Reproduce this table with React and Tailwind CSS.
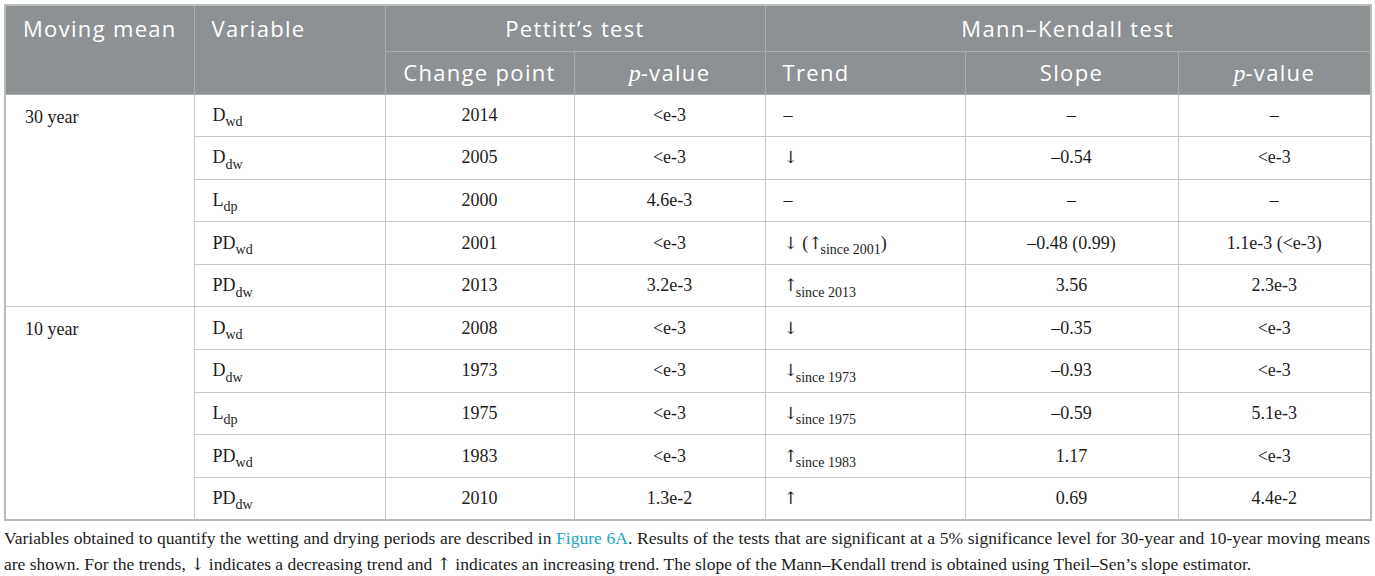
import React from "react";

const serif = { fontFamily: '"Liberation Serif", "Times New Roman", serif' };
const arrowFont = { fontFamily: '"DejaVu Serif", serif' };

function V({ base, sub }) {
    return (
        <span>
            {base}
            <sub className="text-[14px] align-[-2px] leading-none">{sub}</sub>
        </span>
    );
}

function A({ c }) {
    return (
        <span className="text-[17px] font-light" style={arrowFont}>
            {c}
        </span>
    );
}

function Since({ arrow, year }) {
    return (
        <span>
            <A c={arrow} />
            <sub className="text-[14px] align-[-2px] leading-none ml-[-2px]">since {year}</sub>
        </span>
    );
}

const groups = [
    {
        label: "30 year",
        rows: [
            [<V base="D" sub="wd" />, "2014", "<e-3", "–", "–", "–"],
            [<V base="D" sub="dw" />, "2005", "<e-3", <A c="↓" />, "–0.54", "<e-3"],
            [<V base="L" sub="dp" />, "2000", "4.6e-3", "–", "–", "–"],
            [
                <V base="PD" sub="wd" />,
                "2001",
                "<e-3",
                <span>
                    <A c="↓" /> (<Since arrow="↑" year="2001" />)
                </span>,
                "–0.48 (0.99)",
                "1.1e-3 (<e-3)",
            ],
            [<V base="PD" sub="dw" />, "2013", "3.2e-3", <Since arrow="↑" year="2013" />, "3.56", "2.3e-3"],
        ],
    },
    {
        label: "10 year",
        rows: [
            [<V base="D" sub="wd" />, "2008", "<e-3", <A c="↓" />, "–0.35", "<e-3"],
            [<V base="D" sub="dw" />, "1973", "<e-3", <Since arrow="↓" year="1973" />, "–0.93", "<e-3"],
            [<V base="L" sub="dp" />, "1975", "<e-3", <Since arrow="↓" year="1975" />, "–0.59", "5.1e-3"],
            [<V base="PD" sub="wd" />, "1983", "<e-3", <Since arrow="↑" year="1983" />, "1.17", "<e-3"],
            [<V base="PD" sub="dw" />, "2010", "1.3e-2", <A c="↑" />, "0.69", "4.4e-2"],
        ],
    },
];

export default function App() {
    const cell = "border border-[#c9c9c9] px-[18px] align-middle";
    const head = "border border-[#a9adaf] font-normal";

    return (
        <div className="bg-white w-[1375px] h-[576px] pt-[4px] pl-[4px] pr-[4px] text-[#1c1c1c]">
            <table
                className="table-fixed border-collapse w-[1366px] border-2 border-[#b7bdb7]"
                style={serif}
            >
                <colgroup>
                    <col className="w-[189px]" />
                    <col className="w-[191px]" />
                    <col className="w-[189px]" />
                    <col className="w-[191px]" />
                    <col className="w-[200px]" />
                    <col className="w-[213px]" />
                    <col className="w-[193px]" />
                </colgroup>
                <thead
                    className="bg-[#8d9194] text-white text-[22px] tracking-[0.06em]"
                    style={{ fontFamily: '"Open Sans", "Noto Sans", sans-serif' }}
                >
                    <tr className="h-[46px]">
                        <th rowSpan={2} className={`${head} text-left align-top pl-[17px] pt-[6px]`}>
                            Moving mean
                        </th>
                        <th rowSpan={2} className={`${head} text-left align-top pl-[17px] pt-[6px]`}>
                            Variable
                        </th>
                        <th colSpan={2} className={`${head} text-center`}>
                            Pettitt’s test
                        </th>
                        <th colSpan={3} className={`${head} text-center`}>
                            Mann–Kendall test
                        </th>
                    </tr>
                    <tr className="h-[43px]">
                        <th className={`${head} text-center`}>Change point</th>
                        <th className={`${head} text-center`}>
                            <i className="text-[24px] tracking-normal" style={serif}>p</i>-value
                        </th>
                        <th className={`${head} text-left pl-[17px]`}>Trend</th>
                        <th className={`${head} text-center`}>Slope</th>
                        <th className={`${head} text-center`}>
                            <i className="text-[24px] tracking-normal" style={serif}>p</i>-value
                        </th>
                    </tr>
                </thead>
                <tbody className="text-[18px]">
                    {groups.map((g) =>
                        g.rows.map((r, i) => (
                            <tr key={g.label + i} className="h-[42.6px]">
                                {i === 0 && (
                                    <td rowSpan={5} className={`${cell} align-top pt-[9px] pl-[19px]`}>
                                        {g.label}
                                    </td>
                                )}
                                <td className={cell}>{r[0]}</td>
                                <td className={`${cell} text-center`}>{r[1]}</td>
                                <td className={`${cell} text-center`}>{r[2]}</td>
                                <td className={cell}>{r[3]}</td>
                                <td className={`${cell} text-center`}>{r[4]}</td>
                                <td className={`${cell} text-center`}>{r[5]}</td>
                            </tr>
                        ))
                    )}
                </tbody>
            </table>
            <div className="w-[1366px] text-[17.5px] leading-[26px] mt-[4px]" style={serif}>
                <p className="whitespace-nowrap text-justify [text-align-last:justify]">
                    Variables obtained to quantify the wetting and drying periods are described in{" "}
                    <span className="text-[#1ba6c2]">Figure 6A</span>. Results of the tests that are significant at a
                    5% significance level for 30-year and 10-year moving means
                </p>
                <p className="whitespace-nowrap">
                    are shown. For the trends, <A c="↓" /> indicates a decreasing trend and <A c="↑" /> indicates an
                    increasing trend. The slope of the Mann–Kendall trend is obtained using Theil–Sen’s slope
                    estimator.
                </p>
            </div>
        </div>
    );
}
